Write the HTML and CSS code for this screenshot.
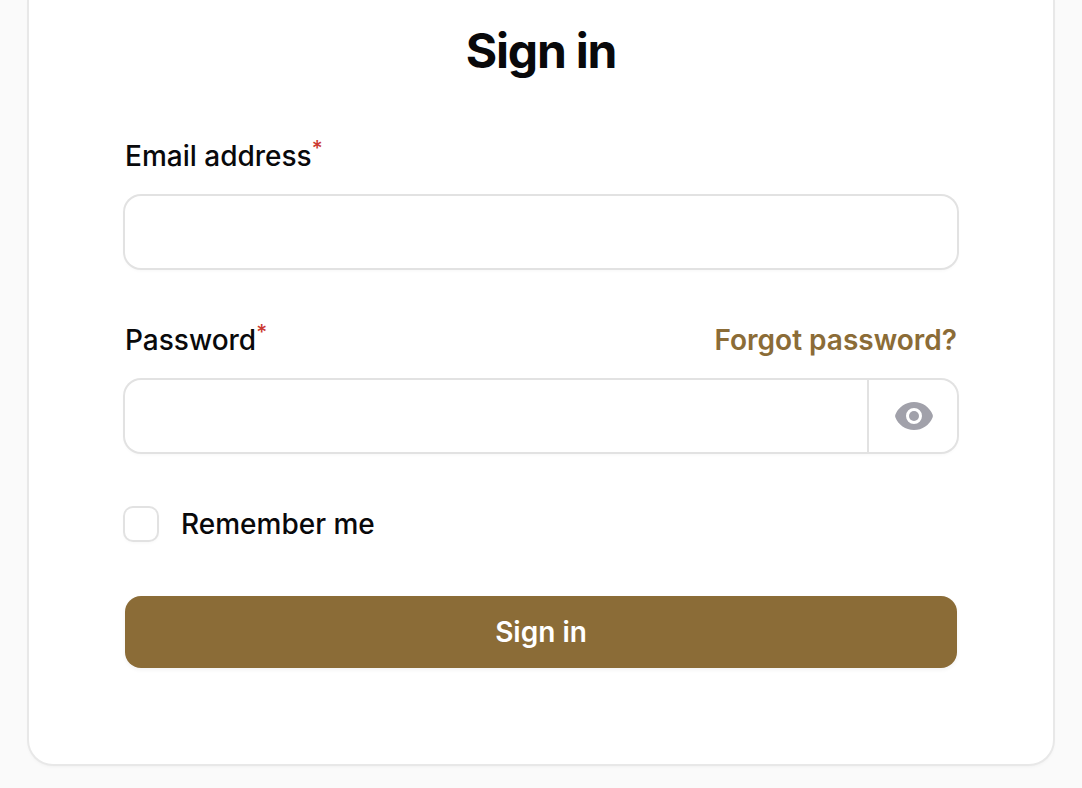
FILE: index.html
```html
<!DOCTYPE html>
<html lang="en">
<head>
<meta charset="utf-8">
<meta name="viewport" content="width=device-width, initial-scale=1">
<title>Sign in</title>
<link rel="stylesheet" href="styles.css">
</head>
<body>
<main class="card">
  <h1 class="title">Sign in</h1>
  <form class="form">
    <div class="field">
      <div class="label-row">
        <label class="label" for="email">Email address<sup class="required">*</sup></label>
      </div>
      <div class="control">
        <input class="input" id="email" type="email" autocomplete="email" required>
      </div>
    </div>
    <div class="field">
      <div class="label-row">
        <label class="label" for="password">Password<sup class="required">*</sup></label>
        <a class="link" href="#">Forgot password?</a>
      </div>
      <div class="control">
        <input class="input" id="password" type="password" autocomplete="current-password" required>
        <button class="reveal" type="button" aria-label="Show password">
          <svg class="eye" viewBox="0 0 20 20" fill="currentColor" aria-hidden="true">
            <path d="M10 12.5a2.5 2.5 0 1 0 0-5 2.5 2.5 0 0 0 0 5Z"/>
            <path fill-rule="evenodd" clip-rule="evenodd" d="M.664 10.59a1.651 1.651 0 0 1 0-1.186A10.004 10.004 0 0 1 10 3c4.257 0 7.893 2.66 9.336 6.41.147.381.146.804 0 1.186A10.004 10.004 0 0 1 10 17c-4.257 0-7.893-2.66-9.336-6.41ZM14 10a4 4 0 1 1-8 0 4 4 0 0 1 8 0Z"/>
          </svg>
        </button>
      </div>
    </div>
    <div class="remember">
      <input class="checkbox" id="remember" type="checkbox">
      <label class="label" for="remember">Remember me</label>
    </div>
    <button class="submit" type="submit">Sign in</button>
  </form>
</main>
</body>
</html>
```
FILE: styles.css
```css
* {
  box-sizing: border-box;
}

body {
  margin: 0;
  padding: 0 29px 24px;
  background: #fafafa;
  color: #09090b;
  font-family: Inter, "Liberation Sans", sans-serif;
  font-size: 28px;
  line-height: 48px;
}

.card {
  padding: 16px 96px 96px;
  background: #fff;
  border-radius: 0 0 24px 24px;
  box-shadow: 0 0 0 2px #e8e8e8, 0 2px 4px rgba(0, 0, 0, 0.06);
}

.title {
  margin: 0 0 46px;
  font-size: 48px;
  font-weight: 700;
  line-height: 70px;
  letter-spacing: -0.025em;
  text-align: center;
}

.form {
  display: flex;
  flex-direction: column;
  gap: 48px;
}

.field {
  display: flex;
  flex-direction: column;
  gap: 16px;
}

.label-row {
  display: flex;
  align-items: center;
  justify-content: space-between;
}

.label {
  font-weight: 500;
}

.required {
  color: #cb3a31;
  font-size: 21px;
  line-height: 0;
}

.link {
  color: #8b6c37;
  font-weight: 600;
  text-decoration: none;
}

.control {
  display: flex;
  height: 72px;
  border-radius: 16px;
  background: #fff;
  box-shadow: 0 0 0 2px #e2e2e2, 0 2px 4px rgba(0, 0, 0, 0.05);
}

.input {
  flex: 1;
  min-width: 0;
  padding: 0 24px;
  border: 0;
  background: transparent;
  color: inherit;
  font: inherit;
  outline: 0;
}

.reveal {
  display: flex;
  align-items: center;
  padding: 0 23px 0 25px;
  border: 0;
  border-left: 2px solid #e2e2e2;
  background: transparent;
  color: #a1a1aa;
}

.eye {
  width: 40px;
  height: 40px;
}

.remember {
  display: flex;
  align-items: center;
  gap: 24px;
}

.checkbox {
  width: 32px;
  height: 32px;
  margin: 0;
  appearance: none;
  border-radius: 8px;
  background: #fff;
  box-shadow: 0 0 0 2px #e2e2e2, 0 2px 4px rgba(0, 0, 0, 0.05);
}

.submit {
  height: 72px;
  padding: 0 24px;
  border: 0;
  border-radius: 16px;
  background: #8b6c37;
  color: #fff;
  font: inherit;
  font-weight: 600;
  box-shadow: 0 2px 4px rgba(0, 0, 0, 0.05);
}
```
